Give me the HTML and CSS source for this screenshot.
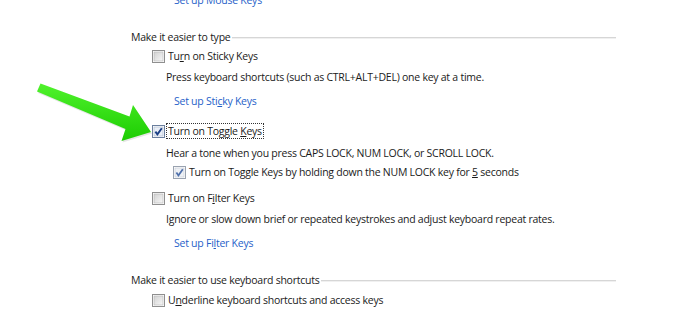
FILE: index.html
```html
<!DOCTYPE html>
<html>
<head>
<meta charset="utf-8">
<link rel="stylesheet" href="styles.css">
</head>
<body>
<div class="page">
  <div class="link top-link">Set up Mouse Keys</div>

  <div class="group-head gh-first"><span>Make it easier to type</span></div>

  <div class="option opt-first">
    <svg class="cb" viewBox="0 0 13 13"><rect x="0.5" y="0.5" width="12" height="12" fill="#fff" stroke="#8f8f8f"/><rect x="2" y="2" width="9" height="9" fill="url(#g)" stroke="#b4b4b4" stroke-width="0.6"/><defs><linearGradient id="g" x1="0" y1="0" x2="1" y2="1"><stop offset="0" stop-color="#d2d2d2"/><stop offset="1" stop-color="#f7f7f7"/></linearGradient></defs></svg>
    <span class="label">Tu<u>r</u>n on Sticky Keys</span>
  </div>
  <div class="desc d-first">Press keyboard shortcuts (such as CTRL+ALT+DEL) one key at a time.</div>
  <div class="link sub-link">Set up Sti<u>c</u>ky Keys</div>

  <div class="option opt-after-link">
    <svg class="cb" viewBox="0 0 13 13"><rect x="0.5" y="0.5" width="12" height="12" fill="#fff" stroke="#6b7f9e"/><rect x="2" y="2" width="9" height="9" fill="#e9eef6" stroke="#a9b6cb" stroke-width="0.6"/><path d="M3.4 6.6 L5.4 9.4 L9.8 3.2" fill="none" stroke="#1b3f86" stroke-width="1.9"/></svg>
    <span class="label focus">Turn on Toggle <u>K</u>eys</span>
  </div>
  <div class="desc d-toggle">Hear a tone when you press CAPS LOCK, NUM LOCK, or SCROLL LOCK.</div>
  <div class="suboption">
    <svg class="cb" viewBox="0 0 13 13"><rect x="0.5" y="0.5" width="12" height="12" fill="#fff" stroke="#9aa3b0"/><rect x="2" y="2" width="9" height="9" fill="#eef1f5" stroke="#c2c8d2" stroke-width="0.6"/><path d="M3.4 6.6 L5.4 9.4 L9.8 3.2" fill="none" stroke="#4f70ab" stroke-width="1.8"/></svg>
    <span class="label">Turn on Toggle Keys by holding down the NUM LOCK key for <u>5</u> seconds</span>
  </div>

  <div class="option opt-after-sub">
    <svg class="cb" viewBox="0 0 13 13"><rect x="0.5" y="0.5" width="12" height="12" fill="#fff" stroke="#8f8f8f"/><rect x="2" y="2" width="9" height="9" fill="url(#g)" stroke="#b4b4b4" stroke-width="0.6"/></svg>
    <span class="label">Turn on F<u>i</u>lter Keys</span>
  </div>
  <div class="desc d-first">Ignore or slow down brief or repeated keystrokes and adjust keyboard repeat rates.</div>
  <div class="link sub-link">Set up Fi<u>l</u>ter Keys</div>

  <div class="group-head gh-second"><span>Make it easier to use keyboard shortcuts</span></div>
  <div class="option opt-first2">
    <svg class="cb" viewBox="0 0 13 13"><rect x="0.5" y="0.5" width="12" height="12" fill="#fff" stroke="#8f8f8f"/><rect x="2" y="2" width="9" height="9" fill="url(#g)" stroke="#b4b4b4" stroke-width="0.6"/></svg>
    <span class="label">U<u>n</u>derline keyboard shortcuts and access keys</span>
  </div>
</div>

<svg class="arrow" width="170" height="150" viewBox="0 0 170 150">
  <defs>
    <linearGradient id="ag" x1="0" y1="0" x2="0" y2="1">
      <stop offset="0" stop-color="#50f22c"/>
      <stop offset="1" stop-color="#1ccc02"/>
    </linearGradient>
  </defs>
  <polygon points="40.5,83.5 129.5,116.5 133,105 151,132 121.5,141 125.5,129 37,91.5" fill="#000" opacity="0.1" transform="translate(1,1.5)"/>
  <polygon points="40.5,83.5 129.5,116.5 133,105 151,132 121.5,141 125.5,129 37,91.5" fill="url(#ag)"/>
</svg>
</body>
</html>
```

FILE: styles.css
```css
html, body {
  margin: 0;
  padding: 0;
  background: #ffffff;
}
body {
  width: 700px;
  height: 322px;
  overflow: hidden;
  position: relative;
  font-family: "Open Sans", "Noto Sans", sans-serif;
  font-size: 10.5px;
  letter-spacing: -0.25px;
  color: #1a1a1a;
}
.page {
  display: flex;
  flex-direction: column;
  padding-left: 131px;
  width: 485px;
}
.page > div {
  height: 16px;
  line-height: 16px;
  white-space: nowrap;
}
.link {
  color: #1f5fc9;
}
.top-link {
  margin-top: -8px;
  padding-left: 43px;
}
.group-head {
  display: flex;
  align-items: center;
}
.group-head::after {
  content: "";
  flex: 1;
  height: 1px;
  margin-left: 2px;
  margin-top: 1px;
  background: #d6d6d6;
  border-bottom: 1px solid #f0f0f0;
}
.gh-first { margin-top: 21px; }
.gh-second { margin-top: 21px; }
.option {
  display: flex;
  align-items: center;
  padding-left: 21px;
}
.cb {
  width: 13px;
  height: 13px;
  flex: none;
}
.label {
  margin-left: 1px;
  padding: 0 1px;
  line-height: 14px;
  border: 1px dotted transparent;
}
.label.focus {
  border-color: #333;
}
.opt-first { margin-top: 3px; }
.opt-first2 { margin-top: 4px; }
.opt-after-link { margin-top: 14px; }
.opt-after-sub { margin-top: 10px; }
.desc {
  padding-left: 35px;
}
.d-first { margin-top: 5px; }
.d-toggle { margin-top: 6px; }
.sub-link {
  margin-top: 8px;
  padding-left: 43px;
}
.suboption {
  display: flex;
  align-items: center;
  padding-left: 42px;
  margin-top: 3px;
}
.arrow {
  position: absolute;
  left: 0;
  top: 0;
}
```
